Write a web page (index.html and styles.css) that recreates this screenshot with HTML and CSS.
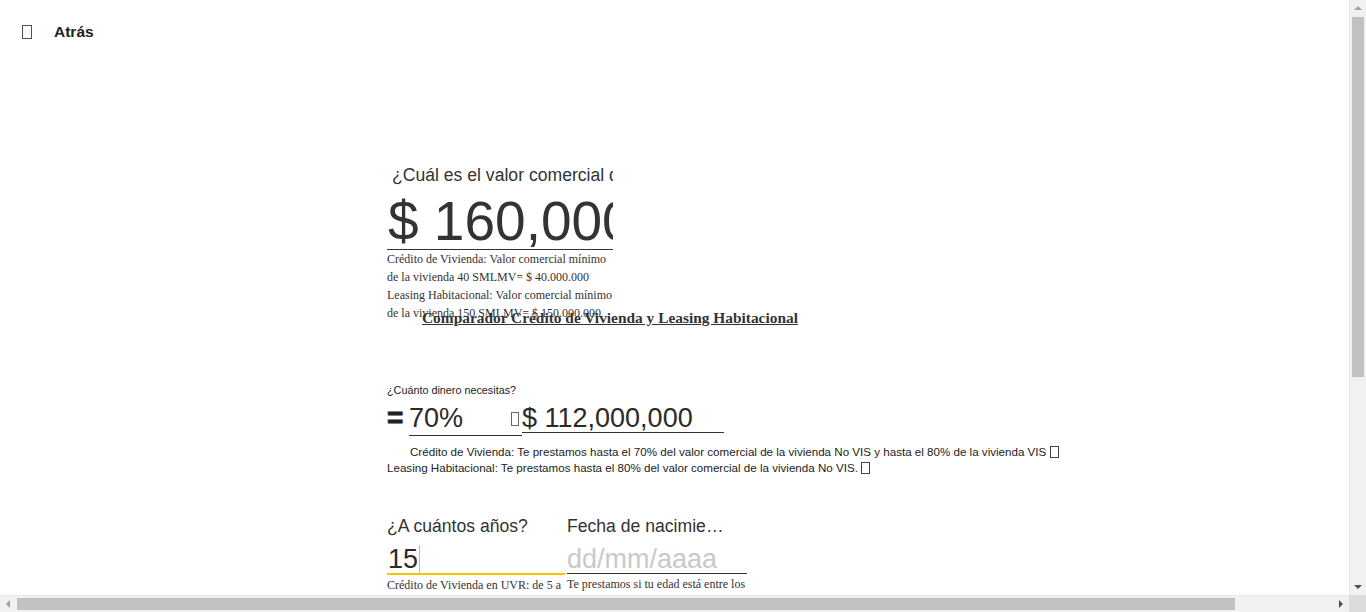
FILE: index.html
```html
<!DOCTYPE html>
<html lang="es">
<head>
<meta charset="utf-8">
<title>Comparador</title>
<link rel="stylesheet" href="styles.css">
</head>
<body>
<div class="page">
  <header class="topbar">
    <span class="tofu tofu-back"></span>
    <span class="back-label">Atrás</span>
  </header>

  <main class="form">
    <section class="field-value">
      <div class="question">¿Cuál es el valor comercial de la vivienda?</div>
      <div class="big-input">$ 160,000,000</div>
      <div class="serif-note">
        Crédito de Vivienda: Valor comercial mínimo de la vivienda 40 SMLMV= $ 40.000.000
        Leasing Habitacional: Valor comercial mínimo de la vivienda 150 SMLMV= $ 150.000.000
      </div>
    </section>

    <h1 class="title">Comparador Crédito de Vivienda y Leasing Habitacional</h1>

    <section class="field-amount">
      <div class="small-label">¿Cuánto dinero necesitas?</div>
      <div class="amount-row">
        <span class="equals">=</span>
        <div class="pct-input"><span>70%</span><span class="tofu tofu-pct"></span></div>
        <div class="amount-input">$ 112,000,000</div>
      </div>
      <p class="sans-note">Crédito de Vivienda: Te prestamos hasta el 70% del valor comercial de la vivienda No VIS y hasta el 80% de la vivienda VIS <span class="tofu tofu-inline"></span><br>Leasing Habitacional: Te prestamos hasta el 80% del valor comercial de la vivienda No VIS. <span class="tofu tofu-inline"></span></p>
    </section>

    <section class="field-pair">
      <div class="col col-years">
        <div class="question q-pair">¿A cuántos años?</div>
        <div class="mid-input focused"><span>15</span><span class="caret"></span></div>
        <div class="serif-note">Crédito de Vivienda en UVR: de 5 a 30 años. Crédito de Vivienda en Pesos: de 5 a 20 años. Leasing Habitacional: de 5 a 20 años.</div>
      </div>
      <div class="col col-date">
        <div class="question q-pair q-date">Fecha de nacimiento</div>
        <div class="mid-input placeholder">dd/mm/aaaa</div>
        <div class="serif-note">Te prestamos si tu edad está entre los 18 y 84 años más el plazo del crédito.</div>
      </div>
    </section>
  </main>
</div>

<div class="sb sb-v" aria-hidden="true">
  <span class="sb-arrow sb-up"></span>
  <span class="sb-thumb-v"></span>
  <span class="sb-arrow sb-down"></span>
</div>
<div class="sb sb-h" aria-hidden="true">
  <span class="sb-arrow sb-left"></span>
  <span class="sb-thumb-h"></span>
  <span class="sb-arrow sb-right"></span>
</div>
<div class="sb-corner" aria-hidden="true"></div>
</body>
</html>
```

FILE: styles.css
```css
html, body {
  margin: 0;
  padding: 0;
  background: #fff;
}

body {
  font-family: "Liberation Sans", Arial, sans-serif;
  color: #2c2a29;
}

.page {
  width: 1460px;
  min-height: 1103px;
}

.tofu {
  display: inline-block;
  box-sizing: border-box;
  border: 1px solid #555;
  vertical-align: middle;
}

.topbar {
  height: 64px;
  display: flex;
  align-items: center;
  padding-left: 22px;
}

.tofu-back {
  width: 10px;
  height: 14px;
  border-color: #4a5560;
}

.back-label {
  margin-left: 22px;
  font-size: 15.5px;
  font-weight: bold;
  color: #222;
}

.form {
  padding-left: 387px;
  padding-top: 100px;
}

.field-value {
  width: 226px;
  height: 145px;
}

.question {
  font-size: 17.6px;
  line-height: 22px;
  color: #333;
  white-space: nowrap;
  overflow: hidden;
  padding-left: 5px;
}

.big-input {
  margin-top: 9px;
  height: 54px;
  font-size: 55px;
  line-height: 52px;
  color: #333;
  border-bottom: 1px solid #333;
  white-space: nowrap;
  overflow: hidden;
  padding-left: 1px;
}

.serif-note {
  font-family: "Liberation Serif", "Times New Roman", serif;
  font-size: 12px;
  line-height: 18px;
  color: #333;
}

.title {
  margin: 0 0 0 35px;
  font-family: "Liberation Serif", "Times New Roman", serif;
  font-size: 15.4px;
  line-height: 18px;
  font-weight: bold;
  text-decoration: underline;
  color: #333;
}

.field-amount {
  margin-top: 57px;
}

.small-label {
  font-size: 10.8px;
  line-height: 13px;
  color: #222;
}

.amount-row {
  margin-top: 6px;
  display: flex;
  align-items: flex-start;
}

.equals {
  width: 22px;
  font-size: 28px;
  font-weight: bold;
  line-height: 30px;
  color: #222;
  -webkit-text-stroke: 0.8px #222;
}

.pct-input {
  width: 113px;
  height: 32px;
  border-bottom: 1px solid #333;
  display: flex;
  justify-content: space-between;
  align-items: flex-start;
  font-size: 27px;
  line-height: 30px;
}

.tofu-pct {
  width: 8px;
  height: 14px;
  margin-top: 9px;
  margin-right: 3px;
  border-color: #666;
}

.amount-input {
  width: 202px;
  height: 29px;
  border-bottom: 1px solid #333;
  font-size: 27px;
  line-height: 30px;
  white-space: nowrap;
}

.sans-note {
  margin: 8px 0 0;
  font-size: 11.6px;
  line-height: 16px;
  color: #222;
  text-indent: 23px;
  width: 700px;
}

.tofu-inline {
  width: 9px;
  height: 12px;
  border-color: #444;
  vertical-align: -2px;
  text-indent: 0;
}

.field-pair {
  margin-top: 39px;
  display: flex;
  gap: 2px;
}

.col {
  width: 178px;
}

.col-date {
  width: 180px;
}

.q-pair {
  padding-left: 0;
}

.q-date {
  width: 160px;
  text-overflow: ellipsis;
}

.mid-input {
  margin-top: 7px;
  height: 29px;
  font-size: 27px;
  line-height: 30px;
  border-bottom: 1px solid #333;
  white-space: nowrap;
  display: flex;
  align-items: flex-start;
}

.mid-input.focused {
  border-bottom: 2px solid #f5c400;
  padding-left: 1px;
}

.caret {
  display: inline-block;
  width: 1px;
  height: 28px;
  margin-top: 1px;
  margin-left: 1px;
  background: #f5c400;
}

.mid-input.placeholder {
  color: #c9c9c9;
}

.col .serif-note {
  margin-top: 1px;
  line-height: 18px;
}

/* Browser scrollbars (drawn over the page) */
.sb {
  position: fixed;
  background: #f1f1f1;
  display: flex;
  align-items: center;
  box-sizing: border-box;
}

.sb-v {
  top: 0;
  right: 0;
  width: 17px;
  height: 595px;
  flex-direction: column;
  border-left: 1px solid #e8e8e8;
}

.sb-h {
  left: 0;
  bottom: 0;
  width: 1349px;
  height: 17px;
  border-top: 1px solid #e8e8e8;
}

.sb-corner {
  position: fixed;
  right: 0;
  bottom: 0;
  width: 17px;
  height: 17px;
  background: #dcdcdc;
}

.sb-thumb-v {
  position: absolute;
  top: 17px;
  left: 2px;
  width: 12px;
  height: 360px;
  background: #c1c1c1;
}

.sb-thumb-h {
  position: absolute;
  left: 17px;
  top: 2px;
  width: 1218px;
  height: 12px;
  background: #c1c1c1;
}

.sb-arrow {
  position: absolute;
  width: 0;
  height: 0;
  border-style: solid;
}

.sb-up {
  top: 6px;
  left: 4px;
  border-width: 0 4px 4px 4px;
  border-color: transparent transparent #a3a3a3 transparent;
}

.sb-down {
  bottom: 6px;
  left: 4px;
  border-width: 4px 4px 0 4px;
  border-color: #505050 transparent transparent transparent;
}

.sb-left {
  left: 6px;
  top: 4px;
  border-width: 4px 4px 4px 0;
  border-color: transparent #a3a3a3 transparent transparent;
}

.sb-right {
  right: 6px;
  top: 4px;
  border-width: 4px 0 4px 4px;
  border-color: transparent transparent transparent #505050;
}
```
